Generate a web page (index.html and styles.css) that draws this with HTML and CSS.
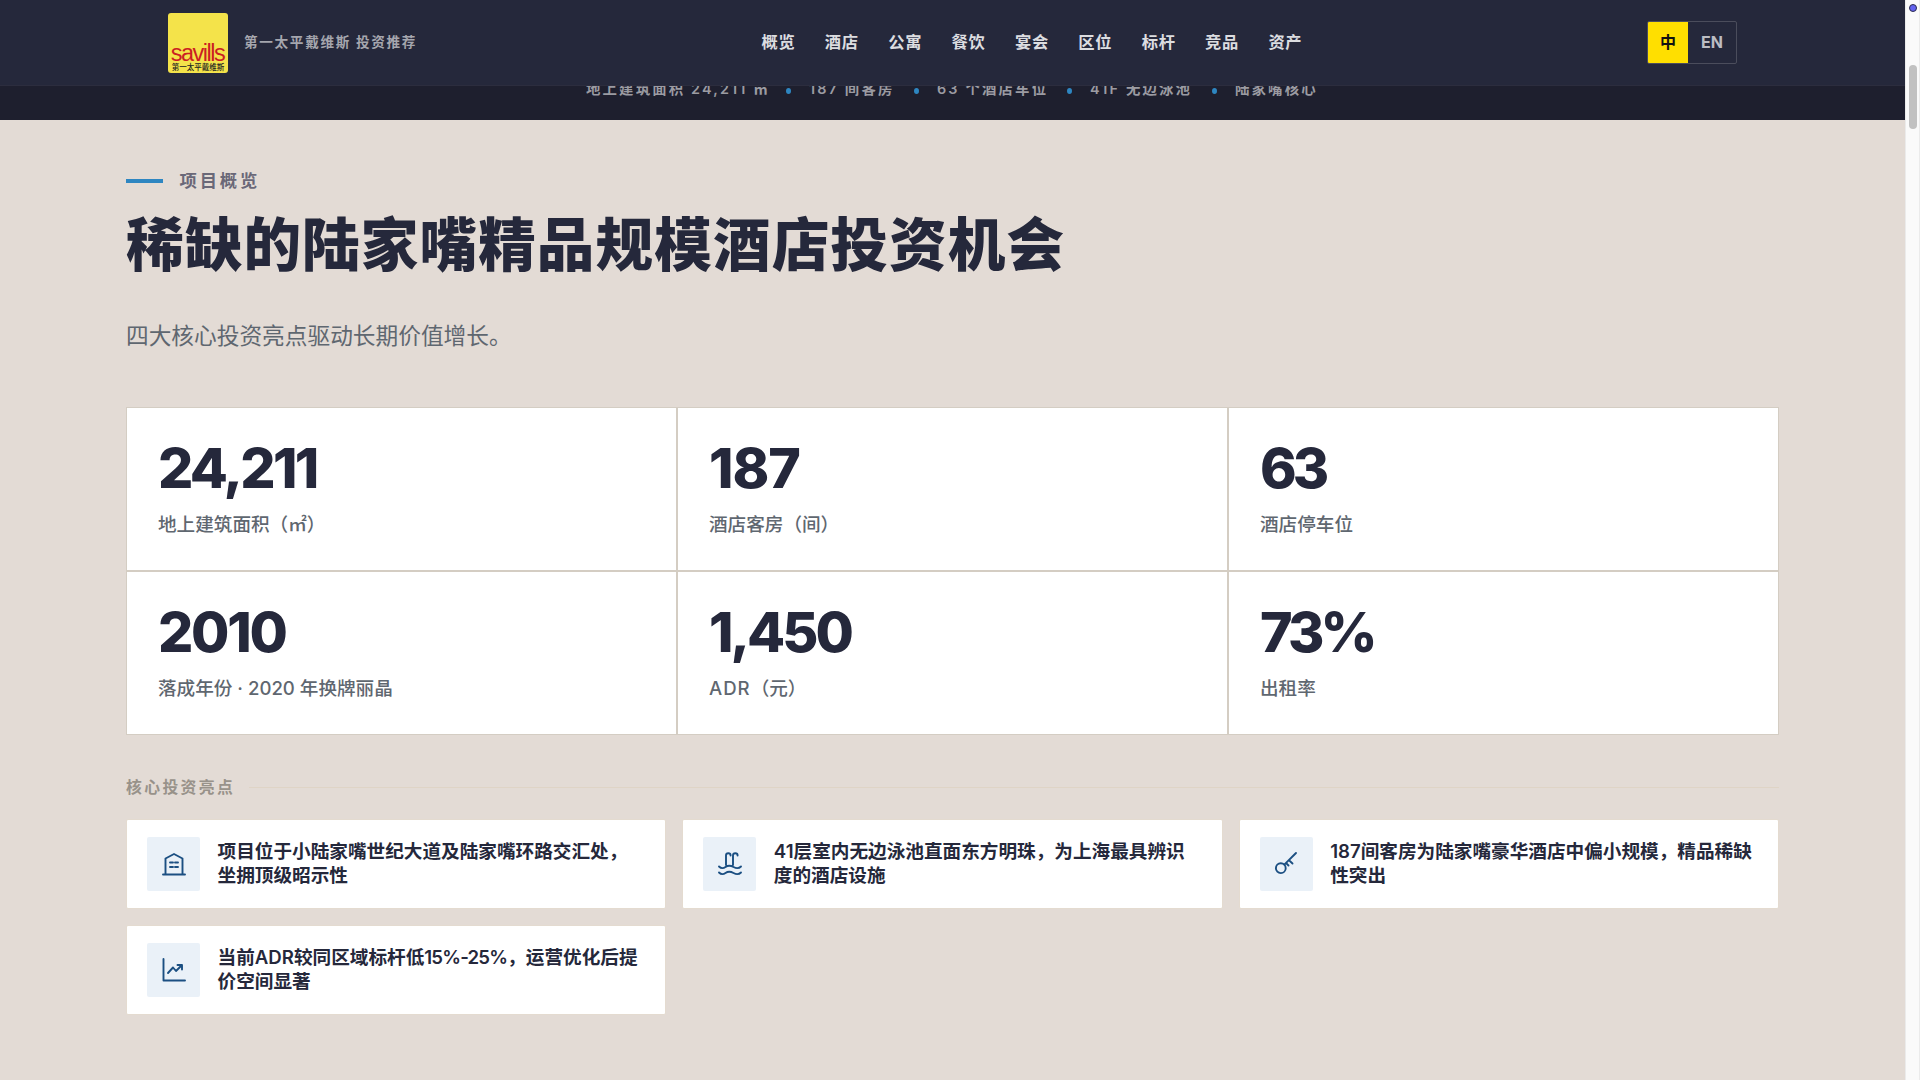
FILE: index.html
```html
<!DOCTYPE html>
<html lang="zh-CN">
<head>
<meta charset="utf-8">
<title>第一太平戴维斯 投资推荐</title>
<link rel="stylesheet" href="styles.css">
</head>
<body>
<div class="page">
  <header class="header">
    <div class="header-inner">
      <div class="brand">
        <div class="logo"><span class="logo-name">savills</span><span class="logo-cn">第一太平戴维斯</span></div>
        <span class="brand-text">第一太平戴维斯 投资推荐</span>
      </div>
      <nav class="nav"><a>概览</a><a>酒店</a><a>公寓</a><a>餐饮</a><a>宴会</a><a>区位</a><a>标杆</a><a>竞品</a><a>资产</a></nav>
      <div class="lang"><span class="lang-item lang-on">中</span><span class="lang-item lang-en">EN</span></div>
    </div>
  </header>
  <div class="facts">
    <span class="f1">地上建筑面积 24,211 ㎡</span><i></i><span class="f2">187 间客房</span><i></i><span class="f3">63 个酒店车位</span><i></i><span class="f4">41F 无边泳池</span><i></i><span class="f5">陆家嘴核心</span>
  </div>
  <main class="overview">
    <div class="eyebrow"><span>项目概览</span></div>
    <h1 class="title">稀缺的陆家嘴精品规模酒店投资机会</h1>
    <p class="lead">四大核心投资亮点驱动长期价值增长。</p>
    <section class="stats">
      <div class="stat"><div class="num n1">24,211</div><div class="label">地上建筑面积（㎡）</div></div>
      <div class="stat"><div class="num n2">187</div><div class="label">酒店客房（间）</div></div>
      <div class="stat"><div class="num n3">63</div><div class="label">酒店停车位</div></div>
      <div class="stat"><div class="num n4">2010</div><div class="label">落成年份 · 2020 年换牌丽晶</div></div>
      <div class="stat"><div class="num n5">1,450</div><div class="label"><span class="wide">ADR</span>（元）</div></div>
      <div class="stat"><div class="num n6">73%</div><div class="label">出租率</div></div>
    </section>
    <h2 class="subhead"><span>核心投资亮点</span></h2>
    <section class="cards">
      <article class="card">
        <div class="icon"><svg viewBox="0 0 26 26"><path d="M2 23.500h22M4.500 23.500V7.500L13 3l8.500 4.500v16M9 11.500h3M14 11.500h3M9 16h3M14 16h3"/></svg></div>
        <p>项目位于小陆家嘴世纪大道及陆家嘴环路交汇处，<br>坐拥顶级昭示性</p>
      </article>
      <article class="card">
        <div class="icon"><svg viewBox="0 0 26 26"><path d="M9 14V4.500a2.300 2.300 0 0 1 4.600 0M16 14V4.500a2.300 2.300 0 0 1 4.600 0M2 15.500q3 3 6.500 0.500t8 0t7.500 -0.500M2 21.500q3 3 6.500 0.500t8 0t7.500 -0.500"/></svg></div>
        <p>41层室内无边泳池直面东方明珠，为上海最具辨识<br>度的酒店设施</p>
      </article>
      <article class="card">
        <div class="icon"><svg viewBox="0 0 26 26"><circle cx="7.800" cy="17.200" r="4.900"/><path d="M11.300 13.700L23 2M16 9.200l3.500 3.300M13 12l2.500 2.500"/></svg></div>
        <p>187间客房为陆家嘴豪华酒店中偏小规模，精品稀缺<br>性突出</p>
      </article>
      <article class="card">
        <div class="icon"><svg viewBox="0 0 26 26"><path d="M2.500 2v21.500H24M7 16l5-5.500 3 3.500 6-6M16.500 8H21v4.500"/></svg></div>
        <p>当前ADR较同区域标杆低<span class="range">15%-25%</span>，运营优化后提<br>价空间显著</p>
      </article>
    </section>
  </main>
</div>
<div class="scrollbar"><div class="marker"></div><div class="thumb"></div></div>
</body>
</html>
```
FILE: styles.css
```css
* { box-sizing: border-box; }
body {
  margin: 0;
  display: flex;
  width: 1920px;
  height: 1080px;
  overflow: hidden;
  background: #e3dbd5;
  color: #25283b;
  font-family: Inter, "Noto Sans CJK SC", sans-serif;
}
.page { width: 1905px; height: 1080px; }
.header {
  position: relative;
  z-index: 2;
  height: 86px;
  background: #25283b;
  border-bottom: 1px solid #2c2d3e;
}
.header-inner {
  display: grid;
  grid-template-columns: 593.500px 1fr auto;
  align-items: center;
  height: 85px;
  padding: 0 168px;
}
.brand { display: flex; align-items: center; gap: 16px; }
.logo {
  display: flex;
  flex-direction: column;
  justify-content: flex-end;
  align-items: center;
  width: 60px;
  height: 60px;
  padding-bottom: 1px;
  border-radius: 3px;
  background: #f4e34a;
  white-space: nowrap;
}
.logo-name {
  font: 23.500px/20px "Liberation Sans", sans-serif;
  letter-spacing: -1.500px;
  margin-left: -1px;
  color: #cb1f22;
}
.logo-cn { font-size: 7.500px; line-height: 9px; font-weight: 500; color: #222; }
.brand-text { padding-bottom: 4px; font-size: 13.600px; font-weight: 700; letter-spacing: 1.690px; color: #a5a6ae; white-space: nowrap; }
.nav { display: flex; gap: 29.400px; padding-bottom: 4px; font-size: 16.300px; font-weight: 700; letter-spacing: .7px; color: #dcdde0; white-space: nowrap; }
.lang {
  display: flex;
  width: 90px;
  height: 43px;
  border: 1px solid #4b4d5c;
  border-radius: 2px;
  overflow: hidden;
}
.lang-item { display: flex; align-items: center; justify-content: center; padding-bottom: 2px; font-size: 16px; font-weight: 700; }
.lang-on { width: 40px; padding-bottom: 4px; background: #ffdf00; color: #111; }
.lang-en { flex: 1; color: #bcbdc3; }
.facts {
  display: flex;
  align-items: center;
  height: 34px;
  padding: 0 0 25px 586px;
  background: #1e1f2e;
  color: #9b9ba2;
  font-size: 14.400px;
  line-height: 20px;
  font-weight: 600;
  letter-spacing: 2.160px;
  white-space: nowrap;
}
.facts span { padding-bottom: 3px; }
.facts i { flex: none; width: 5px; height: 6px; border-radius: 50%; background: #2e86c1; margin-right: 18px; }
.f1 { width: 200px; }
.f2 { width: 105px; }
.f3 { width: 130px; }
.f4 { width: 122px; }
.overview { padding: 46px 126px 0; }
.eyebrow {
  display: flex;
  align-items: center;
  gap: 16.500px;
  height: 30px;
  font-size: 17.300px;
  font-weight: 600;
  letter-spacing: 2.900px;
  color: #6a6878;
}
.eyebrow span { padding-bottom: 4px; }
.eyebrow::before { content: ""; width: 37px; height: 4px; background: #2e86c1; }
.title { margin: 13px 0 0; height: 72px; line-height: 72px; font-size: 57.600px; font-weight: 900; letter-spacing: 1.100px; white-space: nowrap; }
.lead { margin: 39px 0 0; height: 32px; line-height: 32px; font-size: 22.700px; color: #5f6770; }
.stats {
  display: grid;
  grid-template-columns: repeat(3, 1fr);
  grid-template-rows: 1fr 1fr;
  gap: 2px;
  height: 328px;
  margin-top: 55px;
  background: #d4cdc3;
  border: 1px solid #d4cdc3;
}
.stat { padding: 32px 32px 0 31px; background: #fff; }
.num { height: 56px; line-height: 56px; font-size: 55.500px; font-weight: 800; white-space: nowrap; }
.n1 { letter-spacing: -2.700px; }
.n2 { letter-spacing: -1.100px; }
.n3 { letter-spacing: -4px; }
.n4 { letter-spacing: -2.300px; }
.n5 { letter-spacing: -3px; }
.n6 { letter-spacing: -3.800px; }
.label { margin-top: 14px; height: 28px; line-height: 28px; font-size: 18.600px; font-weight: 500; color: #5f6770; white-space: nowrap; }
.wide { letter-spacing: 1px; }
.subhead {
  display: flex;
  align-items: center;
  gap: 14px;
  height: 30px;
  margin: 37px 0 17px;
  font-size: 15.800px;
  font-weight: 600;
  letter-spacing: 2.400px;
  color: #98928a;
}
.subhead span { padding-bottom: 2px; }
.subhead::after { content: ""; flex: 1; height: 1px; background: #dfd4c6; }
.cards { display: grid; grid-template-columns: repeat(3, 1fr); gap: 16px; }
.card {
  display: flex;
  align-items: center;
  gap: 17.500px;
  height: 90px;
  padding: 0 20px;
  border: 1px solid #e4dbd0;
  border-radius: 2px;
  background: #fff;
}
.icon { display: flex; flex: none; align-items: center; justify-content: center; width: 53px; height: 54px; border-radius: 2px; background: #eaf1f8; }
.icon svg { width: 26px; height: 26px; fill: none; stroke: #1b4f82; stroke-width: 1.900; stroke-linecap: round; stroke-linejoin: round; }
.card p { margin: 0; padding-bottom: 2px; font-size: 18.640px; line-height: 24px; font-weight: 600; white-space: nowrap; }
.range { letter-spacing: -.8px; }
.scrollbar {
  display: flex;
  flex-direction: column;
  align-items: center;
  width: 15px;
  height: 1080px;
  padding-top: 4px;
  border: solid #ebebeb;
  border-width: 0 1px;
  background: #fafafa;
}
.marker { width: 8px; height: 8px; border: 1px solid #2b2b4e; border-radius: 50%; background: #6262ef; }
.thumb { width: 8px; height: 64px; margin-top: 53px; border-radius: 4px; background: #c1c1c1; }
```
